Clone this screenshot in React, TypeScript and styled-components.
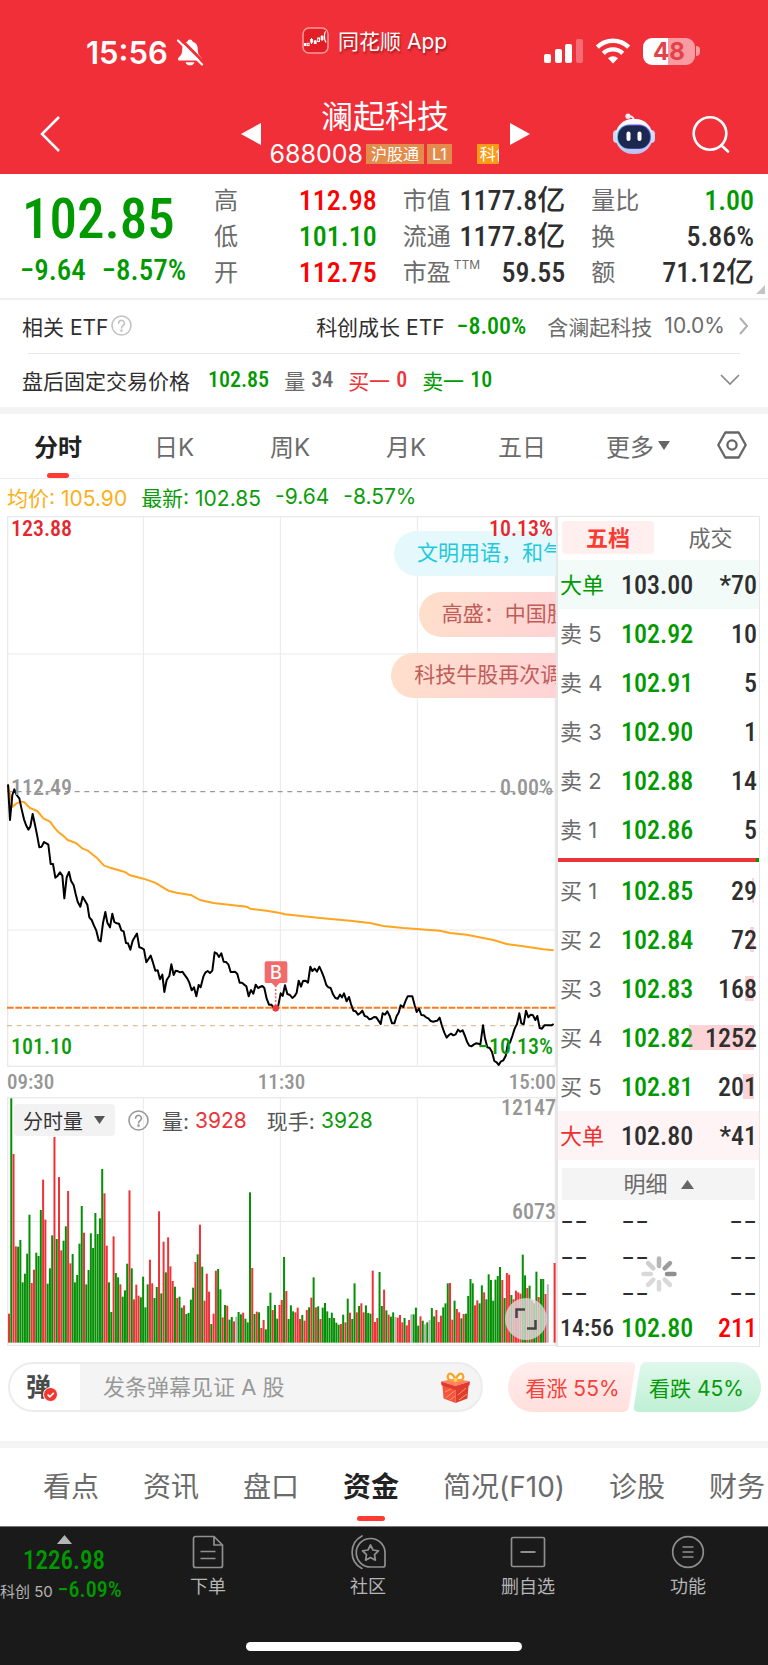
import React from "react";
import styled, { createGlobalStyle, css } from "styled-components";

const RED = "#f12f38";
const UP = "#fe0000";
const DOWN = "#009a00";
const BAR_UP = "#ee3338";
const BAR_DOWN = "#048f04";
const INK = "#2f2f2f";
const GREY = "#6b6b6b";
const LINE = "#ececec";

const TEXT = `Inter, "Noto Sans CJK SC", sans-serif`;
const NUM = `"Roboto Condensed", Roboto, "Noto Sans CJK SC", sans-serif`;

const GlobalStyle = createGlobalStyle`
  *, *::before, *::after { box-sizing: border-box; }
  body { margin: 0; background: #fff; font-family: ${TEXT}; color: ${INK}; -webkit-font-smoothing: antialiased; }
  button { border: 0; padding: 0; background: none; font: inherit; color: inherit; cursor: pointer; }
  a { color: inherit; text-decoration: none; }
  svg { display: block; }
  h1, p, dl, dd { margin: 0; }
`;

const Page = styled.main`
  min-height: 100vh;
  display: flex;
  flex-direction: column;
  overflow-x: hidden;
`;

/* ---------- status bar and title ---------- */

const Hero = styled.header`
  background: ${RED};
  color: #fff;
`;

const StatusBar = styled.div`
  height: 94px;
  padding: 0 68px 0 86px;
  display: grid;
  grid-template-columns: 216px auto 1fr;
  align-items: center;
`;

const Clock = styled.div`
  display: flex;
  align-items: center;
  gap: 8px;
  padding-top: 10px;
  font-size: 31px;
  font-weight: 600;
`;

const BackToApp = styled.a`
  display: flex;
  align-items: center;
  gap: 9px;
  padding-bottom: 14px;
  font-size: 21px;
  text-shadow: 1px 2px 2px rgba(90, 0, 0, 0.5);
`;

const Signals = styled.div`
  display: flex;
  align-items: center;
  justify-content: flex-end;
  gap: 12px;
  padding-top: 8px;
`;

const Battery = styled.div`
  width: 52px;
  height: 27px;
  border-radius: 9px;
  display: grid;
  place-items: center;
  background: linear-gradient(90deg, #fff 49%, #f89ca1 49%);
  color: #e4424a;
  font-size: 24px;
  font-weight: 700;
  line-height: 27px;
`;

const BatteryTip = styled.i`
  width: 4px;
  height: 10px;
  margin-left: -11px;
  border-radius: 0 4px 4px 0;
  background: #f89ca1;
`;

const TitleBar = styled.div`
  height: 80px;
  padding: 0 38px 0 40px;
  display: grid;
  grid-template-columns: 1fr auto 1fr;
  align-items: center;
`;

const BackButton = styled.button`
  display: flex;
  justify-self: start;
`;

const Switcher = styled.div`
  display: flex;
  align-items: center;
  gap: 9px;
`;

const TitleBlock = styled.div`
  width: 231px;
  display: flex;
  flex-direction: column;
  align-items: center;
`;

const StockName = styled.h1`
  font-size: 32px;
  font-weight: 400;
  line-height: 40px;
`;

const CodeRow = styled.p`
  align-self: stretch;
  display: flex;
  align-items: center;
  gap: 3px;
  font-size: 25px;
  line-height: 34px;
`;

const Tag = styled.span<{ $bright?: boolean }>`
  height: 20px;
  padding: 0 ${(p) => (p.$bright ? 3 : 5)}px;
  background: ${(p) => (p.$bright ? "#fb9a14" : "#e38b4a")};
  font-size: 16px;
  line-height: 20px;
`;

const ClippedTag = styled.span`
  width: 22px;
  margin-left: 22px;
  overflow: hidden;
  white-space: nowrap;
  display: flex;
`;

const TitleActions = styled.div`
  display: flex;
  align-items: center;
  justify-content: flex-end;
  gap: 36px;
`;

/* ---------- quote summary ---------- */

const Quote = styled.section`
  position: relative;
  display: grid;
  grid-template-columns: 168px 1fr 1fr 1fr;
  gap: 0 26px;
  padding: 9px 14px 7px 20px;
  border-bottom: 2px solid #f0f0f0;
`;

const Last = styled.div`
  display: flex;
  flex-direction: column;
  align-items: flex-start;
  color: ${DOWN};
  font-family: ${NUM};
  white-space: nowrap;
`;

const LastPrice = styled.strong`
  padding-left: 2px;
  font-size: 55px;
  font-weight: 500;
  line-height: 72px;
`;

const LastChange = styled.span`
  display: flex;
  gap: 16px;
  font-size: 29px;
  font-weight: 500;
  line-height: 30px;
`;

const Stats = styled.dl`
  display: grid;
  grid-auto-rows: 36px;
`;

const Stat = styled.div<{ $color?: string }>`
  display: flex;
  justify-content: space-between;
  align-items: center;
  white-space: nowrap;
  dt { font-size: 24px; line-height: 34px; color: ${GREY}; }
  dd { font: 500 28px/34px ${NUM}; color: ${(p) => p.$color || INK}; }
  sup { font-size: 12px; line-height: 0; vertical-align: 12px; margin-left: 3px; }
`;

const Corner = styled.svg`
  position: absolute;
  right: 3px;
  bottom: 4px;
`;

const InfoRow = styled.a`
  display: flex;
  align-items: center;
  height: 53px;
  padding: 0 20px 2px 22px;
  font-size: 21px;
  white-space: nowrap;
`;

const Divider = styled.hr`
  width: calc(100% - 56px);
  margin: 0 28px;
  border: 0;
  border-top: 1px solid #e8e8e8;
`;

const Spacer = styled.span`
  flex: 1;
`;

const Piece = styled.span<{ $color?: string; $gap?: number; $num?: number }>`
  margin-left: ${(p) => p.$gap || 0}px;
  color: ${(p) => p.$color || "inherit"};
  ${(p) => p.$num && css`font-family: ${NUM}; font-weight: 500; font-size: ${p.$num}px;`}
`;

const Band = styled.div`
  height: 7px;
  background: #f4f4f4;
`;

/* ---------- period tabs ---------- */

const Periods = styled.nav`
  display: grid;
  grid-template-columns: repeat(6, 1fr) 72px;
  height: 65px;
  border-bottom: 1px solid ${LINE};
`;

const PeriodTab = styled.button<{ $active?: boolean }>`
  display: flex;
  align-items: center;
  justify-content: center;
  gap: 4px;
  position: relative;
  padding-bottom: 2px;
  font-size: 24px;
  color: ${(p) => (p.$active ? "#222" : GREY)};
  font-weight: ${(p) => (p.$active ? 700 : 400)};
  ${(p) =>
    p.$active &&
    css`
      &::after {
        content: "";
        position: absolute;
        bottom: 0;
        width: 22px;
        height: 5px;
        border-radius: 3px;
        background: #fd3b30;
      }
    `}
`;

const Legend = styled.p`
  display: flex;
  gap: 14px;
  align-items: center;
  height: 37px;
  padding: 0 7px 2px;
  font-size: 21px;
  color: #0b9c0b;
`;

/* ---------- chart and order book ---------- */

const Market = styled.section`
  display: grid;
  grid-template-columns: minmax(0, 1fr) 204px;
  padding: 0 8px 0 7px;
`;

const Charts = styled.div`
  min-width: 0;
`;

const Plot = styled.div<{ $ratio: string }>`
  position: relative;
  overflow: hidden;
  aspect-ratio: ${(p) => p.$ratio};
  > svg:first-child { width: 100%; height: 100%; }
`;

const PlotLabel = styled.span<{ $color: string; $y: string; $right?: number }>`
  position: absolute;
  top: ${(p) => p.$y};
  ${(p) => (p.$right === undefined ? "left: 4px;" : `right: ${p.$right}px;`)}
  color: ${(p) => p.$color};
  font: 500 22px/26px ${NUM};
`;

const Danmaku = styled.div`
  position: absolute;
  inset: 15px 0 auto 0;
  display: flex;
  flex-direction: column;
  gap: 16px;
`;

const Bullet = styled.span<{ $start: string; $cool?: boolean }>`
  margin-left: ${(p) => p.$start};
  height: 45px;
  padding-left: 23px;
  overflow: hidden;
  border-radius: 23px 0 0 23px;
  background: ${(p) => (p.$cool ? "#e5f9fd" : "linear-gradient(100deg, #ffdfcb, #ffd3d5)")};
  color: ${(p) => (p.$cool ? "#1fc9dc" : "#bf5c5a")};
  font-size: 21px;
  line-height: 44px;
  white-space: nowrap;
`;

const TrendLines = styled.svg`
  position: absolute;
  inset: 0;
  width: 100%;
  height: 100%;
`;

const Times = styled.div`
  display: flex;
  justify-content: space-between;
  font: 500 21px/30px ${NUM};
  color: #969696;
`;

const VolumeBar = styled.div`
  position: absolute;
  top: 7px;
  left: 7px;
  display: flex;
  align-items: center;
  height: 32px;
  font-size: 21px;
  color: #555;
  white-space: nowrap;
`;

const VolumeKind = styled.button`
  display: flex;
  align-items: center;
  gap: 11px;
  width: 101px;
  height: 32px;
  margin-right: 13px;
  padding-left: 9px;
  border-radius: 4px;
  background: #f2f2f2;
  font-size: 20px;
  color: #333;
`;

const Expand = styled.button`
  position: absolute;
  right: 9px;
  bottom: 6px;
  width: 42px;
  height: 42px;
  border-radius: 50%;
  display: grid;
  place-items: center;
  background: rgba(221, 221, 221, 0.78);
`;

const Book = styled.aside`
  border: 1px solid #e6e6e6;
  border-left-width: 2px;
  display: flex;
  flex-direction: column;
`;

const BookTabs = styled.div`
  display: grid;
  grid-template-columns: 92px 1fr;
  gap: 12px;
  height: 43px;
  padding: 4px 4px 6px;
`;

const BookTab = styled.button<{ $active?: boolean }>`
  border-radius: 4px;
  font-size: 22px;
  line-height: 30px;
  background: ${(p) => (p.$active ? "#fff0ef" : "none")};
  color: ${(p) => (p.$active ? "#fb3a32" : GREY)};
  font-weight: ${(p) => (p.$active ? 700 : 400)};
`;

const Levels = styled.table<{ $dense?: boolean }>`
  width: 100%;
  table-layout: fixed;
  border-collapse: collapse;
  th, td { height: ${(p) => (p.$dense ? 36 : 49)}px; padding: 0; white-space: nowrap; }
  th { width: 63px; padding-left: 2px; text-align: left; font-size: 22px; font-weight: 400; line-height: 30px; color: ${GREY}; }
  td { font: 500 26px/28px ${NUM}; }
`;

const LevelRow = styled.tr<{ $big?: "sell" | "buy" }>`
  ${(p) =>
    p.$big &&
    css`
      background: ${p.$big === "sell" ? "#f2fbf8" : "#fff4f5"};
      && th { color: ${p.$big === "sell" ? DOWN : "#f0302f"}; }
    `}
`;

const Price = styled.td<{ $color: string }>`
  width: 82px;
  color: ${(p) => p.$color};
`;

const Qty = styled.td<{ $color?: string }>`
  position: relative;
  text-align: right;
  color: ${(p) => p.$color || INK};
  && { padding-right: 2px; }
  span { position: relative; }
`;

const Depth = styled.i`
  position: absolute;
  right: 5px;
  top: 12px;
  height: 25px;
  background: rgba(244, 80, 90, 0.25);
`;

const Ratio = styled.div`
  height: 4px;
  margin: 4px 0;
  background: linear-gradient(90deg, ${BAR_UP} 98.5%, ${DOWN} 98.5%);
`;

const Details = styled.button`
  display: flex;
  align-items: center;
  justify-content: center;
  gap: 13px;
  height: 32px;
  margin: 8px 4px 2px;
  background: #f4f4f4;
  color: ${GREY};
  font-size: 22px;
  line-height: 30px;
`;

const Ticks = styled.div`
  position: relative;
  th { color: ${INK}; font: 500 24px/28px ${NUM}; }
`;

const DashRow = styled.tr`
  && th, && td { padding-top: 6px; font: 400 28px/30px ${NUM}; }
`;

const Spinner = styled.svg`
  position: absolute;
  left: 50%;
  top: 50%;
  transform: translate(-50%, -50%);
`;

/* ---------- comment bar ---------- */

const Talk = styled.section`
  display: flex;
  align-items: center;
  gap: 25px;
  padding: 15px 7px 29px 8px;
`;

const CommentBox = styled.form`
  flex: 1;
  display: flex;
  align-items: center;
  height: 50px;
  padding-right: 11px;
  border: 2px solid #ececec;
  border-radius: 25px;
  overflow: hidden;
  background: #f4f4f4;
`;

const BulletToggle = styled.button`
  position: relative;
  width: 70px;
  height: 48px;
  background: #fff;
  font-size: 25px;
  font-weight: 700;
  color: #4a4a4a;
  text-align: left;
  padding: 0 0 4px 16px;
  svg { position: absolute; left: 33px; bottom: 9px; }
`;

const CommentInput = styled.input`
  flex: 1;
  min-width: 0;
  height: 46px;
  padding: 0 0 0 23px;
  border: 0;
  outline: 0;
  background: none;
  font: 400 22px ${TEXT};
  &::placeholder { color: #999; opacity: 1; }
`;

const Votes = styled.div`
  display: flex;
  width: 253px;
`;

const Vote = styled.button<{ $fall?: boolean }>`
  position: relative;
  z-index: 0;
  flex: 1;
  height: 50px;
  overflow: hidden;
  font-size: 21px;
  color: ${(p) => (p.$fall ? "#059a05" : "#f8403a")};
  border-radius: ${(p) => (p.$fall ? "6px 25px 25px 6px" : "25px 6px 6px 25px")};
  margin-left: ${(p) => (p.$fall ? "-5px" : "0")};
  &::before {
    content: "";
    position: absolute;
    z-index: -1;
    inset: ${(p) => (p.$fall ? "0 -20px 0 5px" : "0 5px 0 -20px")};
    border-radius: 5px;
    transform: skewX(-9deg);
    background: ${(p) =>
      p.$fall ? "linear-gradient(#dff8ec, #bff0d4)" : "linear-gradient(#ffeeed, #ffdfdc)"};
  }
`;

const Sections = styled.nav`
  display: flex;
  gap: 44px;
  height: 78px;
  padding-left: 43px;
  overflow: hidden;
`;

const SectionTab = styled.a<{ $active?: boolean }>`
  position: relative;
  flex: none;
  display: flex;
  justify-content: center;
  font-size: 28px;
  line-height: 78px;
  color: ${(p) => (p.$active ? "#222" : GREY)};
  font-weight: ${(p) => (p.$active ? 700 : 400)};
  ${(p) =>
    p.$active &&
    css`
      &::after {
        content: "";
        position: absolute;
        bottom: 5px;
        width: 28px;
        height: 5px;
        border-radius: 3px;
        background: #fd3b30;
      }
    `}
`;

/* ---------- bottom bar ---------- */

const Dock = styled.footer`
  flex: 1;
  display: flex;
  flex-direction: column;
  justify-content: space-between;
  align-items: center;
  min-height: 140px;
  background: #1a1a1a;
  border-top: 1px solid #777;
  padding-bottom: 15px;
`;

const DockNav = styled.nav`
  width: 100%;
  display: grid;
  grid-template-columns: 128px repeat(4, 1fr);
`;

const IndexLink = styled.a`
  display: flex;
  flex-direction: column;
  align-items: center;
  padding-top: 8px;
  color: ${DOWN};
  font: 500 25px/34px ${NUM};
  white-space: nowrap;
`;

const IndexChange = styled.span`
  align-self: flex-start;
  display: flex;
  align-items: baseline;
  gap: 5px;
  font-size: 22px;
  line-height: 24px;
  small { font: 400 15px ${TEXT}; color: #b5b5b5; }
`;

const DockLink = styled.a`
  display: flex;
  flex-direction: column;
  align-items: center;
  gap: 6px;
  padding-top: 8px;
  font-size: 18px;
  line-height: 24px;
  color: #b5b5b5;
`;

const HomeBar = styled.i`
  width: 36%;
  height: 9px;
  border-radius: 5px;
  background: #fff;
`;

/* ---------- data ---------- */

const MORNING =
  "24,73 30,180 37,105 43,88 50,105 58,115 65,148 72,178 78,195 85,209 91,200 98,162 104,190 111,224 118,262 125,260 132,246 139,250 145,254 152,312 159,312 166,353 173,347 180,337 187,347 193,415 200,352 207,336 213,362 221,376 227,402 233,425 241,440 248,410 255,422 262,434 268,472 275,480 282,497 289,512 296,541 302,544 309,489 316,456 322,488 330,502 337,461 343,486 350,490 357,491 364,511 371,514 378,549 384,550 391,569 398,542 405,530 411,521 418,562 425,564 432,569 439,607 446,596 452,587 459,608 466,632 473,631 480,658 487,644 493,696 500,660 508,648 514,613 521,645 527,632 534,634 541,637 547,635 555,646 562,656 568,668 575,691 582,682 589,709 596,675 602,682 610,650 616,638 623,633 630,639 637,632 644,577 651,581 657,591 664,580 671,605 678,606 685,613 692,636 698,636 705,635 712,642 719,668 726,668 733,674 739,679 746,709 753,690 760,701 767,674 774,684 780,681 787,678 793,684 800,716 807,734 814,734 820,742 828,745";
const AFTERNOON =
  "17,385 25,376 32,340 38,348 45,316 52,342 60,345 67,354 74,348 80,338 86,302 93,320 99,303 107,302 114,308 121,260 127,273 134,266 141,275 148,260 155,275 162,293 169,315 175,322 182,324 189,343 196,354 203,356 210,344 216,352 222,340 230,364 237,351 243,372 250,392 257,394 264,404 271,399 277,392 284,408 291,410 298,418 305,416 312,411 319,412 325,421 332,432 338,400 345,404 352,394 359,408 366,430 373,430 380,408 386,398 392,376 400,381 407,362 413,349 420,349 427,349 434,376 440,396 447,386 454,405 461,406 468,412 475,415 482,423 490,425 497,423 502,422 509,413 516,438 523,458 530,473 537,465 543,461 550,466 557,463 564,449 571,455 578,451 585,468 591,485 598,497 604,499 611,494 618,490 625,491 631,494 639,436 645,475 652,502 659,504 666,516 673,543 680,547 686,555 692,545 700,541 707,528 714,489 720,488 727,468 734,446 741,432 748,400 754,430 761,433 768,392 775,412 782,404 789,406 796,420 802,408 809,444 816,446 823,436 830,436 837,436 844,436 851,432";
const AVG_MORNING =
  "24,75 38,140 50,130 62,125 72,126 90,144 112,153 130,175 150,185 165,205 175,216 188,226 203,240 228,249 248,266 262,271 290,293 312,317 330,323 375,336 390,346 430,356 465,368 505,392 530,398 575,406 600,420 640,429 700,436 740,440 750,446 800,452 840,459";
const AVG_AFTERNOON =
  "30,99 45,103 150,114 240,122 300,129 340,138 400,144 440,147 510,152 540,159 590,164 670,180 710,192 760,199 820,208 851,211";

/* One entry per minute: r = up, g = down, n = unchanged, x = no trades; the number is the top edge of the bar. */
const VOLUME = `r671 g25 r192 r469 g470 g450 g577 g551 g491 g374 r579 r539 g488 g498 g360 r269 r389 g581 g535 g436
r141 g447 r261 r481 g452 g409 r303 r520 g492 g577 g555 g461 g348 r428 g583 g540 g430 g474 g369 g432
g385 g237 r310 r467 g577 g666 r439 g549 g562 r583 g620 g601 g521 r301 g535 r628 r584 r617 g622 g560
g652 g583 r509 r580 g624 g591 r364 g610 r455 g547 r442 r529 r573 g590 r624 g620 g653 r646 g672 g669
g629 g593 r516 g493 r404 g530 r632 r551 r605 g702 r671 r542 g537 g598 r682 g645 r647 g689 g681 r694
n680 g666 g673 r668 g686 g697 g307 r534 g672 r665 g667 r714 r690 g718 g648 g608 r660 g645 g686 r645
r630 g501 r603 g687 g646 g664 r667 r653 r687 g675 r692 r660 g652 r623 g562 r652 g649 r687 g653 g639
g664 g684 g668 g684 g698 g704 r702 g674 r697 g626 r668 g687 g580 r667 g648 r640 r667 g646 g669 g671
r542 r696 r684 g546 g648 r599 g661 r674 g680 g667 n681 r683 r675 r697 g684 r706 r690 n673 g673 g653
g707 r679 g692 n703 g697 n690 g654 g679 r660 r696 r677 g652 g640 g580 r579 r689 g632 r657 r667 g685
r672 g671 g618 g567 g580 r646 r631 g640 g586 r607 g628 g553 g570 g632 g569 g558 g531 r570 g624 r549
r554 g615 r628 r602 r607 r611 g494 g556 r594 g587 r632 g640 g545 r621 g567 g567 r612 n583 x x r519`.split(/\s+/);

const BAR_COLORS: Record<string, string> = { r: BAR_UP, g: BAR_DOWN, n: "#b4b4b4" };

const STATS: [string, string, string?][][] = [
  [["高", "112.98", UP], ["低", "101.10", DOWN], ["开", "112.75", UP]],
  [["市值", "1177.8亿"], ["流通", "1177.8亿"], ["市盈", "59.55"]],
  [["量比", "1.00", DOWN], ["换", "5.86%"], ["额", "71.12亿"]],
];

const SELLS = [["卖5", "102.92", "10"], ["卖4", "102.91", "5"], ["卖3", "102.90", "1"], ["卖2", "102.88", "14"], ["卖1", "102.86", "5"]] as const;
const BUYS = [["买1", "102.85", "29", 2], ["买2", "102.84", "72", 4], ["买3", "102.83", "168", 9], ["买4", "102.82", "1252", 65], ["买5", "102.81", "201", 11]] as const;

/* ---------- icons ---------- */

const Triangle = ({ w, h, d, color = "#fff" }: { w: number; h: number; d: "l" | "r" | "u" | "d"; color?: string }) => {
  const pts = {
    l: `0,${h / 2} ${w},0 ${w},${h}`,
    r: `0,0 ${w},${h / 2} 0,${h}`,
    u: `0,${h} ${w / 2},0 ${w},${h}`,
    d: `0,0 ${w},0 ${w / 2},${h}`,
  }[d];
  return (
    <svg width={w} height={h} aria-hidden>
      <polygon points={pts} fill={color} />
    </svg>
  );
};

const BellOff = () => (
  <svg width="28" height="28" viewBox="0 0 28 28" aria-hidden>
    <path d="M14 1.500c-1.500 0-2.300.9-2.500 2.100C8 4.700 6.200 7.600 6.200 11.200c0 5-1.700 6.600-3.700 8.600-1 1-.6 2.700.9 2.700h21.200c1.500 0 1.900-1.700.9-2.700-2-2-3.700-3.600-3.700-8.600 0-3.600-1.800-6.500-5.300-7.600C16.300 2.400 15.500 1.500 14 1.500z" fill="#fff" />
    <path d="M9.500 24.200h9c-.6 1.900-2.200 3.100-4.500 3.100s-3.900-1.200-4.500-3.100z" fill="#fff" />
    <path d="M4.500 1L28 24.500" stroke={RED} strokeWidth="3" />
    <path d="M2 2.500L26 26.500" stroke="#fff" strokeWidth="2.200" strokeLinecap="round" />
  </svg>
);

const AppLogo = () => (
  <svg width="27" height="27" viewBox="0 0 27 27" aria-hidden>
    <rect x="1" y="1" width="25" height="25" rx="6" fill="#e21f26" stroke="#ff9a9c" strokeWidth="1.500" />
    <g fill="#fff" stroke="#fff">
      <path d="M3 16.500v2M9.500 11v6M13 13v4M20 8v6" strokeWidth="1" />
      <rect x="2.500" y="16.500" width="1.500" height="2" />
      <rect x="12.300" y="14" width="1.800" height="2.500" />
      <rect x="19.200" y="9.500" width="1.800" height="3" />
      <rect x="5.300" y="16.300" width="1.800" height="2.300" fill="none" />
      <rect x="8.700" y="12.500" width="1.800" height="2.600" fill="none" />
      <rect x="15.700" y="11" width="1.800" height="3.500" fill="none" />
      <path d="M24 4.500c-1.500 0-1.800 4-1.300 8l1.300 3" strokeWidth="1.200" fill="none" />
    </g>
  </svg>
);

const Cellular = () => (
  <svg width="39" height="26" viewBox="0 0 39 26" fill="#fff" aria-hidden>
    <rect x="0" y="16" width="7" height="9" rx="2" />
    <rect x="11" y="11" width="7" height="14" rx="2" />
    <rect x="21" y="6" width="7" height="19" rx="2" />
    <rect x="32" y="1" width="7" height="24" rx="2" opacity="0.300" />
  </svg>
);

const Wifi = () => (
  <svg width="36" height="26" viewBox="0 0 36 26" fill="none" stroke="#fff" strokeWidth="4.400" aria-hidden>
    <path d="M2.300 9.200a22.500 22.500 0 0 1 31.400 0" />
    <path d="M8.300 15.300a14 14 0 0 1 19.400 0" />
    <path d="M18 25.500l-5-5.200a7.300 7.300 0 0 1 10 0z" fill="#fff" stroke="none" />
  </svg>
);

const Robot = () => (
  <svg width="44" height="42" viewBox="0 0 44 42" aria-hidden>
    <defs>
      <linearGradient id="shell" x1="0" y1="0" x2="0" y2="1">
        <stop offset="0" stopColor="#ffffff" />
        <stop offset="1" stopColor="#b9c0ec" />
      </linearGradient>
      <linearGradient id="rim" x1="0" y1="0" x2="1" y2="0">
        <stop offset="0" stopColor="#37c9dc" />
        <stop offset="0.500" stopColor="#7c4ff0" />
        <stop offset="1" stopColor="#4c6ff0" />
      </linearGradient>
    </defs>
    <path d="M22 8c0-3-1-4.500-4.500-4.800" fill="none" stroke="#e9ebfb" strokeWidth="2" />
    <circle cx="16" cy="3.200" r="2.600" fill="#eef0fd" />
    <rect x="1" y="17" width="8" height="13" rx="4" fill="#cfd5f2" />
    <rect x="35" y="17" width="8" height="13" rx="4" fill="#cfd5f2" />
    <rect x="3.500" y="6" width="37" height="35" rx="17" fill="url(#shell)" />
    <rect x="5" y="11.500" width="34" height="24.500" rx="12" fill="url(#rim)" />
    <rect x="6" y="12.500" width="32" height="23" rx="11" fill="#1d2851" />
    <rect x="14.500" y="18.500" width="4" height="9.500" rx="2" fill="#fff" />
    <rect x="25.500" y="18.500" width="4" height="9.500" rx="2" fill="#fff" />
  </svg>
);

const Magnifier = () => (
  <svg width="38" height="38" viewBox="0 0 38 38" fill="none" stroke="#fff" strokeWidth="2.600" aria-hidden>
    <circle cx="18" cy="18.500" r="16.300" />
    <path d="M29.500 30.500l6.500 6" strokeLinecap="round" />
  </svg>
);

const Help = ({ color = "#999" }: { color?: string }) => (
  <svg width="21" height="21" viewBox="0 0 21 21" fill="none" stroke={color} strokeWidth="1.600" aria-hidden>
    <circle cx="10.500" cy="10.500" r="9.500" />
    <path d="M7.600 8.300a2.900 2.900 0 1 1 4.600 2.300c-1.100.8-1.700 1.200-1.700 2.400" strokeLinecap="round" />
    <circle cx="10.500" cy="15.600" r="0.500" fill={color} />
  </svg>
);

const Hexagon = () => (
  <svg width="30" height="28" viewBox="0 0 30 28" fill="none" stroke="#666" strokeWidth="2.300" strokeLinejoin="round" aria-hidden>
    <path d="M8.300 1.500h13.400L28.700 14l-7 12.500H8.300L1.300 14z" />
    <circle cx="15" cy="14" r="4.600" />
  </svg>
);

const Gift = () => (
  <svg width="29" height="31" viewBox="0 0 29 31" aria-hidden>
    <path d="M1.200 11l13.300 3.500V31L2.600 26.500z" fill="#f5543f" />
    <path d="M27.800 11l-13.300 3.500V31l11.900-4.500z" fill="#df3d2e" />
    <path d="M0 9.500L14.500 6.500 29 9.500 14.500 14z" fill="#ff8266" />
    <path d="M0 9.500L14.500 14v4L.5 13.300zM29 9.500L14.500 14v4l14-4.700z" fill="#e23a2c" />
    <path d="M4 20l6-3M4.500 26l9-7M9 28l5-4M17 23l8-7M18 28l8-6" stroke="#fb9a6c" strokeWidth="1" />
    <path d="M14 8.500C8.500 9.500 5.800 6.500 7 3.300s5.500-2 7.500 4.700C16.500 1.300 20.800.1 22 3.300s-1.500 6.200-7 5.200" fill="none" stroke="#f7a428" strokeWidth="2.200" />
    <circle cx="14.500" cy="8" r="2" fill="#ffd15e" />
  </svg>
);

const OrderIcon = () => (
  <svg width="34" height="34" viewBox="0 0 34 34" fill="none" stroke="#8f8f8f" strokeWidth="1.700" aria-hidden>
    <path d="M23 1.500H4.500a2 2 0 0 0-2 2v27a2 2 0 0 0 2 2h25a2 2 0 0 0 2-2V10L23 1.500zM23 1.500V10h8.500M9.500 16.500h15M9.500 23.500h15" />
  </svg>
);

const CommunityIcon = () => (
  <svg width="36" height="34" viewBox="0 0 36 34" fill="none" stroke="#8f8f8f" strokeWidth="1.700" strokeLinejoin="round" aria-hidden>
    <path d="M20.500 3.500A14.200 14.200 0 1 0 20.500 32H33a2 2 0 0 0 2-2V18A14.400 14.400 0 0 0 20.500 3.500z" />
    <path d="M12 1a18.300 18.300 0 0 0 0 32.500" strokeLinecap="round" />
    <path d="M20.500 10l2.500 5 5.500.8-4 3.900.9 5.500-4.900-2.600-4.900 2.600.9-5.500-4-3.900 5.500-.8z" />
  </svg>
);

const RemoveIcon = () => (
  <svg width="36" height="34" viewBox="0 0 36 34" fill="none" stroke="#8f8f8f" strokeWidth="1.700" aria-hidden>
    <rect x="1.500" y="2.500" width="33" height="29" rx="1.500" />
    <path d="M10.500 17h15" strokeWidth="2" />
  </svg>
);

const MenuIcon = () => (
  <svg width="34" height="34" viewBox="0 0 34 34" fill="none" stroke="#8f8f8f" strokeWidth="1.700" aria-hidden>
    <circle cx="17" cy="17" r="15.300" />
    <path d="M11.500 12h11M11.500 17h11M11.500 22h11" />
  </svg>
);

/* ---------- page parts ---------- */

const Grid = ({ rows, h }: { rows: number[]; h: number }) => (
  <g stroke="#e9e9e9" strokeWidth="3" fill="none">
    <rect x="1.500" y="1.500" width="1644" height={h - 3} strokeWidth="5" />
    {[409, 820, 1231].map((x) => <path key={x} d={`M${x} 0V${h}`} />)}
    {rows.map((y) => <path key={y} d={`M0 ${y}H1647`} />)}
  </g>
);

const TrendChart = () => (
  <Plot $ratio="549 / 551">
    <svg viewBox="0 0 1647 1653" preserveAspectRatio="none" role="img" aria-label="分时走势">
      <Grid rows={[414, 1242]} h={1653} />
    </svg>
    <Danmaku>
      <Bullet $start="70.500%" $cool>文明用语，和气</Bullet>
      <Bullet $start="75%">高盛：中国股</Bullet>
      <Bullet $start="70%">科技牛股再次调</Bullet>
    </Danmaku>
    <TrendLines viewBox="0 0 1647 1653" preserveAspectRatio="none" aria-hidden>
      <g fill="none" strokeLinejoin="round">
        <path d="M0 827H1647" stroke="#9a9a9a" strokeWidth="4" strokeDasharray="15 14" />
        <path d="M0 1529H1647" stroke="#dcbf98" strokeWidth="4" strokeDasharray="15 14" />
        <path d="M0 1475H1647" stroke="#fb7d1c" strokeWidth="6" strokeDasharray="20 5" />
        <g transform="translate(-21 732)">
          <polyline points={AVG_MORNING} stroke="#ffa51f" strokeWidth="6" />
          <polyline points={MORNING} stroke="#000" strokeWidth="6" />
        </g>
        <g transform="translate(789 1092)">
          <polyline points={AVG_AFTERNOON} stroke="#ffa51f" strokeWidth="6" />
          <polyline points={AFTERNOON} stroke="#000" strokeWidth="6" />
        </g>
      </g>
      <path d="M806 1408V1470" stroke="#f26b6b" strokeWidth="5" strokeDasharray="6 5" />
      <circle cx="806" cy="1477" r="10" fill="#ea3a3f" />
      <path d="M778 1336h58a5 5 0 0 1 5 5v55a5 5 0 0 1-5 5h-18l-12 12-12-12h-16a5 5 0 0 1-5-5v-55a5 5 0 0 1 5-5z" fill="#f26b6b" />
      <text x="807" y="1388" textAnchor="middle" fontFamily="Inter, sans-serif" fontSize="54" fontWeight="500" fill="#fff">B</text>
    </TrendLines>
    <PlotLabel $color="#e6262b" $y="0px">123.88</PlotLabel>
    <PlotLabel $color="#e6262b" $y="0px" $right={3}>10.13%</PlotLabel>
    <PlotLabel $color="#969696" $y="47%">112.49</PlotLabel>
    <PlotLabel $color="#969696" $y="47%" $right={3}>0.00%</PlotLabel>
    <PlotLabel $color="#0b9c0b" $y="94%">101.10</PlotLabel>
    <PlotLabel $color="#0b9c0b" $y="94%" $right={3}>−10.13%</PlotLabel>
  </Plot>
);

const VolumeChart = () => (
  <Plot $ratio="549 / 249">
    <svg viewBox="0 0 1647 747" preserveAspectRatio="none" role="img" aria-label="分时成交量">
      <Grid rows={[373]} h={747} />
      {VOLUME.map((v, i) =>
        v === "x" ? null : (
          <rect key={i} x={3 + i * 6.82} y={Number(v.slice(1)) - 21} width={6} height={758 - Number(v.slice(1))} fill={BAR_COLORS[v[0]]} />
        )
      )}
    </svg>
    <VolumeBar>
      <VolumeKind type="button">分时量 <Triangle w={11} h={8} d="d" color="#555" /></VolumeKind>
      <Help />
      <Piece $gap={13}>量: </Piece>
      <Piece $gap={6} $color="#ee3338">3928</Piece>
      <Piece $gap={20}>现手: </Piece>
      <Piece $gap={6} $color="#0b9c0b">3928</Piece>
    </VolumeBar>
    <PlotLabel $color="#969696" $y="-2px" $right={0}>12147</PlotLabel>
    <PlotLabel $color="#969696" $y="41%" $right={0}>6073</PlotLabel>
    <Expand type="button" aria-label="全屏">
      <svg width="22" height="22" viewBox="0 0 22 22" fill="none" stroke="#444" strokeWidth="2.500" aria-hidden>
        <path d="M1.500 10V1.500H10M20.500 12v8.500H12" />
      </svg>
    </Expand>
  </Plot>
);

const OrderBook = () => (
  <Book>
    <BookTabs>
      <BookTab type="button" $active>五档</BookTab>
      <BookTab type="button">成交</BookTab>
    </BookTabs>
    <Levels>
      <tbody>
        <LevelRow $big="sell">
          <th scope="row">大单</th><Price $color={INK}>103.00</Price><Qty>*70</Qty>
        </LevelRow>
        {SELLS.map(([n, p, q]) => (
          <LevelRow key={n}>
            <th scope="row">{n[0]} {n[1]}</th><Price $color={DOWN}>{p}</Price><Qty>{q}</Qty>
          </LevelRow>
        ))}
      </tbody>
    </Levels>
    <Ratio />
    <Levels>
      <tbody>
        {BUYS.map(([n, p, q, w]) => (
          <LevelRow key={n}>
            <th scope="row">{n[0]} {n[1]}</th><Price $color={DOWN}>{p}</Price>
            <Qty><Depth style={{ width: w }} /><span>{q}</span></Qty>
          </LevelRow>
        ))}
        <LevelRow $big="buy">
          <th scope="row">大单</th><Price $color={INK}>102.80</Price><Qty>*41</Qty>
        </LevelRow>
      </tbody>
    </Levels>
    <Details type="button">明细 <Triangle w={13} h={9} d="u" color="#666" /></Details>
    <Ticks>
      <Levels $dense>
        <tbody>
          {[0, 1, 2].map((i) => (
            <DashRow key={i}>
              <th scope="row">−−</th><Price $color={INK}>−−</Price><Qty>−−</Qty>
            </DashRow>
          ))}
          <tr><th scope="row">14:56</th><Price $color={DOWN}>102.80</Price><Qty $color={UP}>211</Qty></tr>
        </tbody>
      </Levels>
      <Spinner width="36" height="36" viewBox="-18 -18 36 36" aria-hidden>
        {["#8f8f8f", "#d9d9d9", "#d9d9d9", "#d9d9d9", "#d9d9d9", "#cdcdcd", "#b5b5b5", "#9c9c9c"].map((c, i) => (
          <path key={i} d="M8 0H15.500" stroke={c} strokeWidth="4.500" strokeLinecap="round" transform={`rotate(${i * 45})`} />
        ))}
      </Spinner>
    </Ticks>
  </Book>
);

export default function App() {
  return (
    <>
      <GlobalStyle />
      <Page>
        <Hero>
          <StatusBar>
            <Clock>15:56 <BellOff /></Clock>
            <BackToApp href="#app"><AppLogo /><span>同花顺 App</span></BackToApp>
            <Signals><Cellular /><Wifi /><Battery>48</Battery><BatteryTip /></Signals>
          </StatusBar>
          <TitleBar>
            <BackButton type="button" aria-label="返回">
              <svg width="22" height="38" viewBox="0 0 22 38" fill="none" stroke="#fff" strokeWidth="2.500" aria-hidden>
                <path d="M19 2L2 19l17 17" />
              </svg>
            </BackButton>
            <Switcher>
              <button type="button" aria-label="上一只"><Triangle w={20} h={22} d="l" /></button>
              <TitleBlock>
                <StockName>澜起科技</StockName>
                <CodeRow>
                  688008 <Tag>沪股通</Tag> <Tag>L1</Tag>
                  <ClippedTag><Tag $bright>科创</Tag></ClippedTag>
                </CodeRow>
              </TitleBlock>
              <button type="button" aria-label="下一只"><Triangle w={20} h={22} d="r" /></button>
            </Switcher>
            <TitleActions>
              <button type="button" aria-label="智能助手"><Robot /></button>
              <button type="button" aria-label="搜索"><Magnifier /></button>
            </TitleActions>
          </TitleBar>
        </Hero>

        <Quote>
          <Last>
            <LastPrice>102.85</LastPrice>
            <LastChange><span>−9.64</span><span>−8.57%</span></LastChange>
          </Last>
          {STATS.map((col, i) => (
            <Stats key={i}>
              {col.map(([k, v, c]) => (
                <Stat key={k} $color={c}><dt>{k}{k === "市盈" && <sup>TTM</sup>}</dt><dd>{v}</dd></Stat>
              ))}
            </Stats>
          ))}
          <Corner width="9" height="9" aria-hidden><path d="M9 0V9H0z" fill="#c4c4c4" /></Corner>
        </Quote>

        <InfoRow href="#etf">
          相关 ETF <Piece $gap={3}><Help color="#c2c2c2" /></Piece>
          <Spacer />
          科创成长 ETF
          <Piece $num={24} $gap={12} $color={DOWN}>−8.00%</Piece>
          <Piece $gap={21} $color={GREY}>含澜起科技</Piece>
          <Piece $gap={12} $color={GREY}>10.0%</Piece>
          <Piece $gap={14}>
            <svg width="9" height="18" viewBox="0 0 9 18" fill="none" stroke="#b0b0b0" strokeWidth="2" aria-hidden><path d="M1 1l7 8-7 8" /></svg>
          </Piece>
        </InfoRow>
        <Divider />
        <InfoRow href="#after-hours">
          盘后固定交易价格
          <Piece $num={22} $gap={18} $color={DOWN}>102.85</Piece>
          <Piece $gap={15} $color={GREY}>量</Piece><Piece $num={22} $gap={6} $color={GREY}>34</Piece>
          <Piece $gap={15} $color="#ee3338">买一</Piece><Piece $num={22} $gap={6} $color="#ee3338">0</Piece>
          <Piece $gap={15} $color={DOWN}>卖一</Piece><Piece $num={22} $gap={6} $color={DOWN}>10</Piece>
          <Spacer />
          <svg width="20" height="12" viewBox="0 0 20 12" fill="none" stroke="#8a8a8a" strokeWidth="1.700" aria-hidden><path d="M1 1l9 9 9-9" /></svg>
          <Piece $gap={8} />
        </InfoRow>
        <Band />

        <Periods>
          <PeriodTab type="button" $active>分时</PeriodTab>
          <PeriodTab type="button">日K</PeriodTab>
          <PeriodTab type="button">周K</PeriodTab>
          <PeriodTab type="button">月K</PeriodTab>
          <PeriodTab type="button">五日</PeriodTab>
          <PeriodTab type="button">更多 <Triangle w={12} h={9} d="d" color="#666" /></PeriodTab>
          <PeriodTab type="button" aria-label="设置"><Hexagon /></PeriodTab>
        </Periods>
        <Legend>
          <Piece $color="#fbb01c">均价: 105.90</Piece>
          <span>最新: 102.85</span><span>-9.64</span><span>-8.57%</span>
        </Legend>

        <Market>
          <Charts>
            <TrendChart />
            <Times><span>09:30</span><span>11:30</span><span>15:00</span></Times>
            <VolumeChart />
          </Charts>
          <OrderBook />
        </Market>

        <Talk>
          <CommentBox>
            <BulletToggle type="button">
              弹
              <svg width="15" height="15" viewBox="0 0 15 15" aria-hidden>
                <circle cx="7.500" cy="7.500" r="7" fill="#f5352e" stroke="#fff" />
                <path d="M4.500 7.500l2.300 2.300 4-4" fill="none" stroke="#fff" strokeWidth="1.700" />
              </svg>
            </BulletToggle>
            <CommentInput aria-label="发弹幕" placeholder="发条弹幕见证 A 股" />
            <button type="button" aria-label="礼物"><Gift /></button>
          </CommentBox>
          <Votes>
            <Vote type="button">看涨 55%</Vote>
            <Vote type="button" $fall>看跌 45%</Vote>
          </Votes>
        </Talk>
        <Band />

        <Sections>
          {["看点", "资讯", "盘口", "资金", "简况(F10)", "诊股", "财务"].map((t) => (
            <SectionTab key={t} href={`#${t}`} $active={t === "资金"}>{t}</SectionTab>
          ))}
        </Sections>

        <Dock>
          <DockNav>
            <IndexLink href="#index">
              <Triangle w={15} h={9} d="u" color="#b5b5b5" />
              1226.98
              <IndexChange><small>科创 50</small> −6.09%</IndexChange>
            </IndexLink>
            <DockLink href="#order"><OrderIcon />下单</DockLink>
            <DockLink href="#community"><CommunityIcon />社区</DockLink>
            <DockLink href="#remove"><RemoveIcon />删自选</DockLink>
            <DockLink href="#menu"><MenuIcon />功能</DockLink>
          </DockNav>
          <HomeBar />
        </Dock>
      </Page>
    </>
  );
}
